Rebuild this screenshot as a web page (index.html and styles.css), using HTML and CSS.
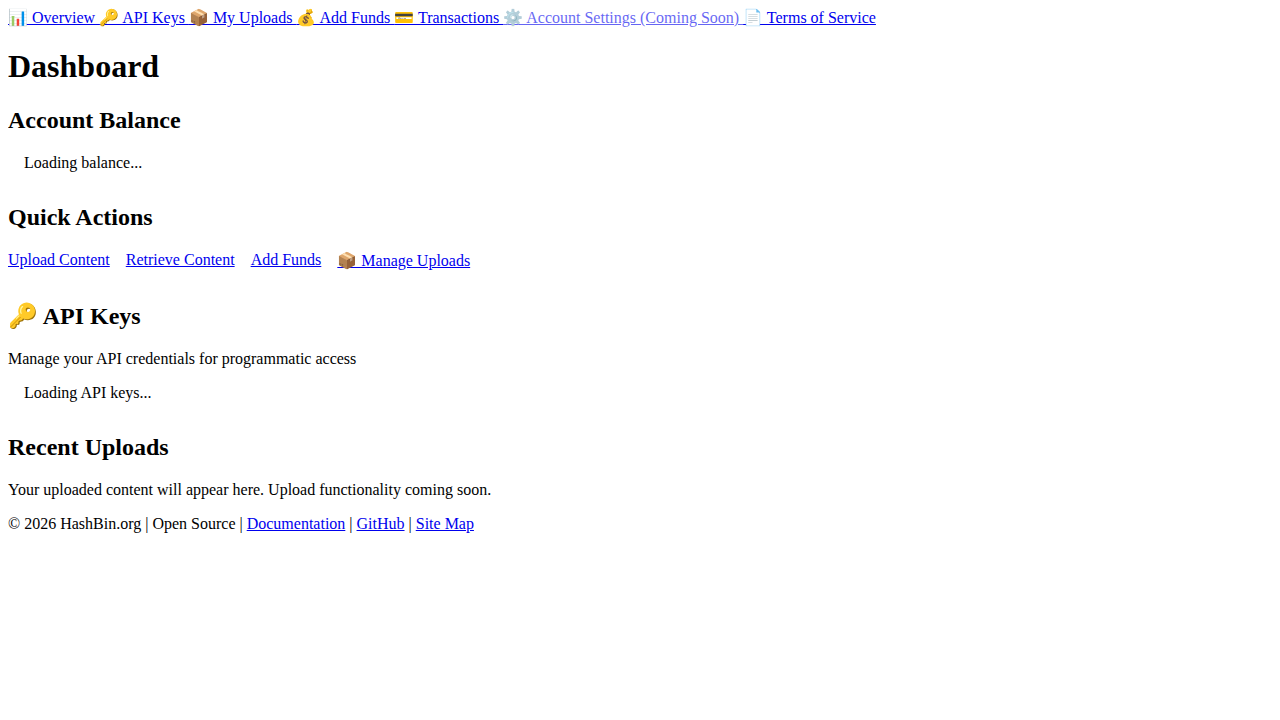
FILE: index.html
```html
<!DOCTYPE html>
<html>
<head>
<meta charset="utf-8">
<title>Dashboard</title>
<link rel="stylesheet" href="styles.css">
</head>
<body>
<nav><a href="#">📊 Overview </a><a href="#">🔑 API Keys </a><a href="#">📦 My Uploads </a><a href="#">💰 Add Funds </a><a href="#">💳 Transactions </a><a href="#" class="disabled">⚙️ Account Settings (Coming Soon) </a><a href="#">📄 Terms of Service</a></nav>
<main>
<h1>Dashboard</h1>
<section>
<h2>Account Balance</h2>
<div class="loading">Loading balance...</div>
</section>
<section>
<h2>Quick Actions</h2>
<div class="actions">
<a href="#">Upload Content</a>
<a href="#">Retrieve Content</a>
<a href="#">Add Funds</a>
<a href="#">📦 Manage Uploads</a>
</div>
</section>
<section>
<h2>🔑 API Keys</h2>
<p>Manage your API credentials for programmatic access</p>
<div class="loading">Loading API keys...</div>
</section>
<section>
<h2>Recent Uploads</h2>
<p>Your uploaded content will appear here. Upload functionality coming soon.</p>
</section>
</main>
<footer>
<p>© 2026 HashBin.org | Open Source | <a href="#">Documentation</a> | <a href="#">GitHub</a> | <a href="#">Site Map</a></p>
</footer>
</body>
</html>
```
FILE: styles.css
```css
body {
  font-family: "Liberation Serif", "Times New Roman", serif;
  font-size: 16px;
  color: #000;
}
a {
  color: #00e;
}
section {
  margin-bottom: 32px;
}
section:last-child {
  margin-bottom: 0;
}
.disabled {
  opacity: 0.6;
}
.loading {
  padding: 0 16px;
  margin: 16px 0;
}
.actions {
  display: flex;
  gap: 16px;
  margin-bottom: 16px;
}
```
